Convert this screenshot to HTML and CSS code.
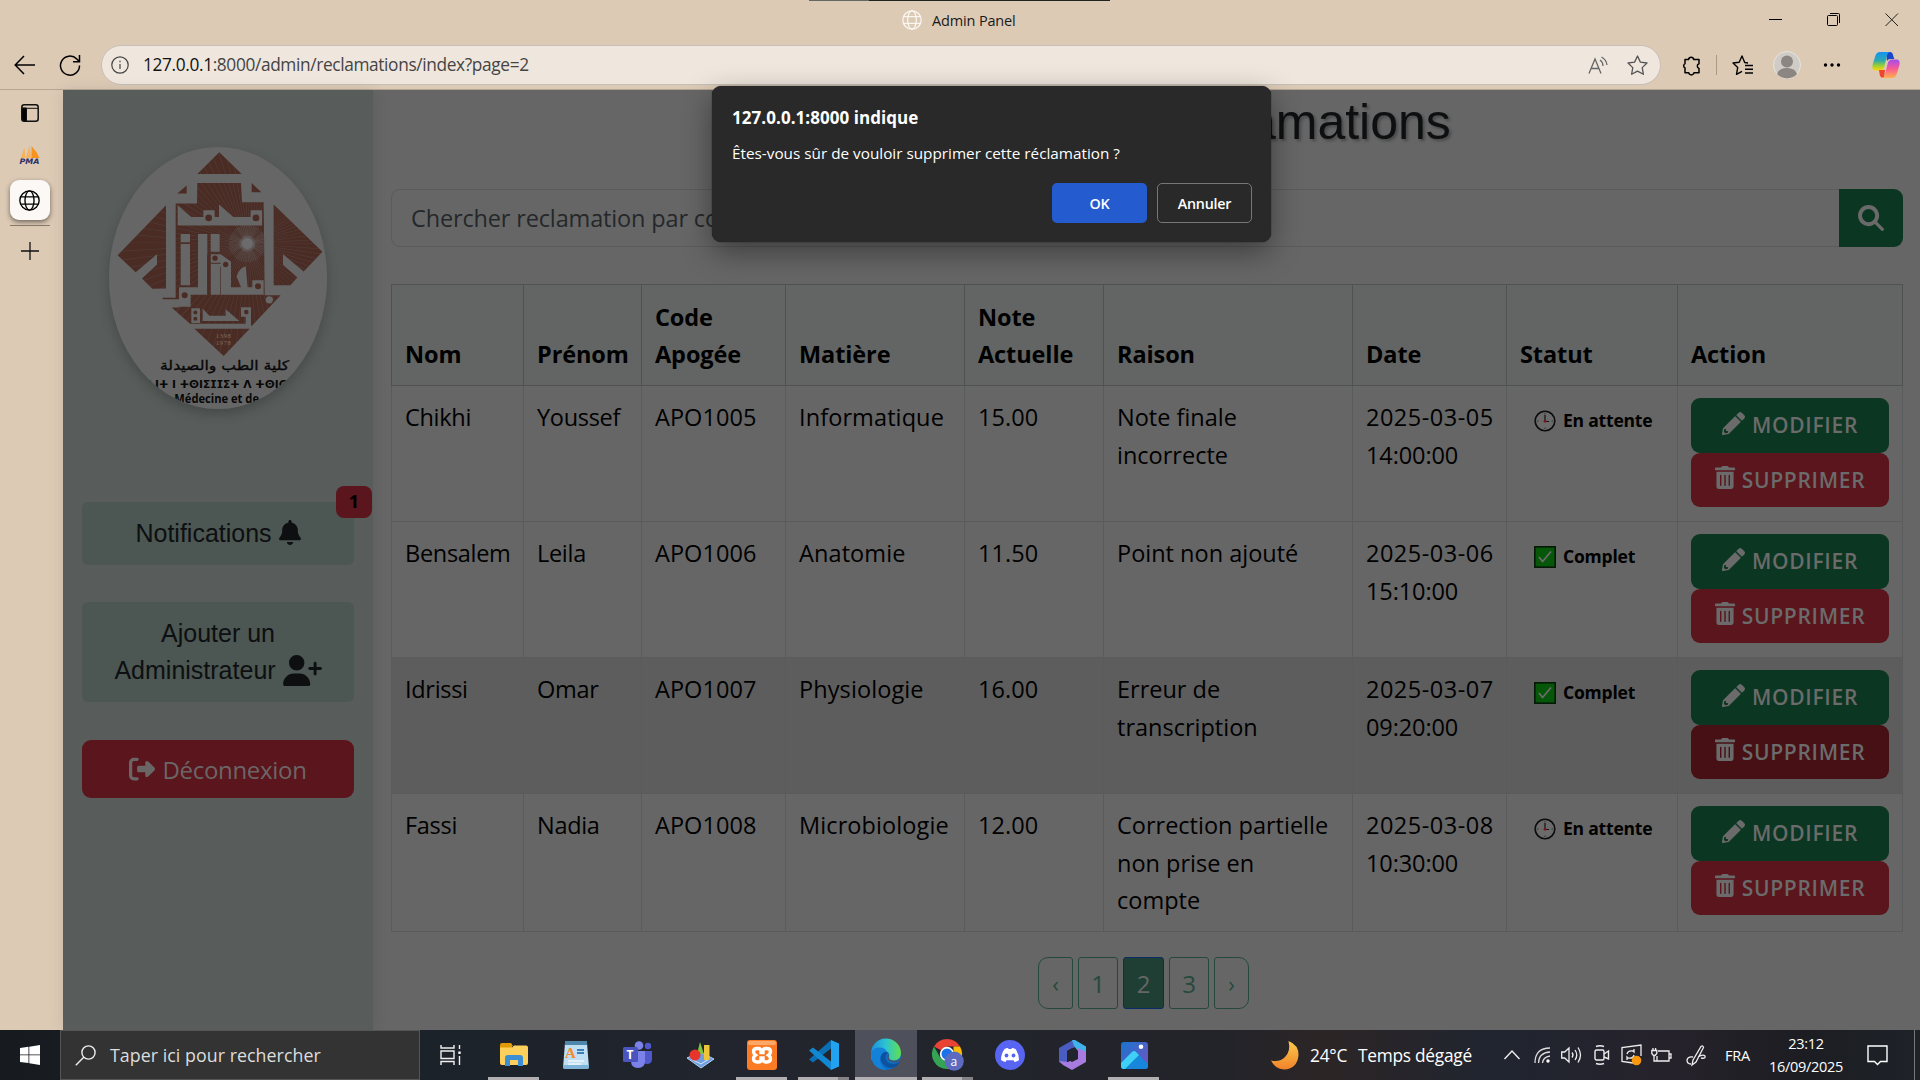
FILE: index.html
```html
<!DOCTYPE html>
<html lang="fr">
<head>
<meta charset="utf-8">
<title>Admin Panel</title>
<link rel="stylesheet" href="styles.css">
</head>
<body>
<svg class="defs" width="0" height="0" aria-hidden="true">
  <symbol id="pencil" viewBox="0 0 512 512"><path d="M497.9 142.1l-46.1 46.1c-4.7 4.7-12.3 4.7-17 0l-111-111c-4.7-4.7-4.7-12.3 0-17l46.1-46.1c18.7-18.7 49.1-18.7 67.9 0l60.1 60.1c18.8 18.7 18.8 49.1 0 67.9zM284.2 99.8L21.6 362.4.4 483.9c-2.9 16.4 11.4 30.6 27.8 27.8l121.5-21.3 262.6-262.6c4.7-4.7 4.7-12.3 0-17l-111-111c-4.8-4.7-12.4-4.7-17.1 0zM88 424h48v36.3l-64.5 11.3-31.1-31.1L51.7 376H88v48z"/></symbol>
  <symbol id="trash" viewBox="0 0 448 512"><path d="M32 464a48 48 0 0 0 48 48h288a48 48 0 0 0 48-48V128H32zm272-256a16 16 0 0 1 32 0v224a16 16 0 0 1-32 0zm-96 0a16 16 0 0 1 32 0v224a16 16 0 0 1-32 0zm-96 0a16 16 0 0 1 32 0v224a16 16 0 0 1-32 0zM432 32H312l-9.4-18.7A24 24 0 0 0 281.1 0H166.8a23.7 23.7 0 0 0-21.4 13.3L136 32H16A16 16 0 0 0 0 48v32a16 16 0 0 0 16 16h416a16 16 0 0 0 16-16V48a16 16 0 0 0-16-16z"/></symbol>
  <symbol id="clock" viewBox="0 0 22 22"><circle cx="11" cy="11" r="9.8" fill="#6b6b6b" stroke="#0c0c0c" stroke-width="1.6"/><g stroke="#333" stroke-width="1"><path d="M11 3v1.5M11 17.5V19M3 11h1.5M17.5 11H19"/></g><path d="M11 5v6.5h4" fill="none" stroke="#111" stroke-width="1.2"/><circle cx="11" cy="11.3" r="1.4" fill="#7c1620"/></symbol>
  <symbol id="check" viewBox="0 0 22 22"><rect x=".8" y=".8" width="20.4" height="20.4" fill="#06570a" stroke="#041504" stroke-width="1.5"/><path d="M5 11l3.600 4.500L17 5.500" fill="none" stroke="#6d6d6d" stroke-width="1.7"/></symbol>
  <symbol id="globe" viewBox="0 0 20 20"><g fill="none" stroke="currentColor" stroke-width="1.3"><circle cx="10" cy="10" r="9.2"/><ellipse cx="10" cy="10" rx="4.3" ry="9.2"/><path d="M1.6 6.6h16.8M1.6 13.4h16.8"/></g></symbol>
</svg>

<div class="screen">
  <header class="titlebar">
    <div class="peek"></div>
    <div class="tab-title"><svg width="20" height="20"><use href="#globe"/></svg><span>Admin Panel</span></div>
    <div class="win-buttons">
      <svg width="14" height="14"><path d="M0 6.5h13" stroke="#000"/></svg>
      <svg width="14" height="14" fill="none" stroke="#000"><rect x=".5" y="2.5" width="10" height="10" rx="1"/><path d="M3 .5h8.500a1 1 0 0 1 1 1V10"/></svg>
      <svg width="14" height="14"><path d="M.5.5l12.500 12.500M13 .5L.5 13" stroke="#222" fill="none"/></svg>
    </div>
  </header>

  <div class="toolbar">
    <div class="nav-buttons">
      <svg width="22" height="20" fill="none" stroke="#000" stroke-width="1.5"><path d="M21 10H1.500M10 1L1.200 10l8.800 9"/></svg>
      <svg width="22" height="22" fill="none" stroke="#000" stroke-width="1.500"><path d="M20.500 11.500A9.500 9.500 0 1 1 17.800 5l2.500 2.500M20.500 1v6.700h-6.500"/></svg>
    </div>
    <div class="address">
      <svg width="18" height="18" fill="none" stroke="#444" stroke-width="1.200"><circle cx="9" cy="9" r="8.200"/><path d="M9 8v5M9 4.800v1.500"/></svg>
      <span class="url"><b>127.0.0.1</b>:8000/admin/reclamations/index?page=2</span>
      <svg class="aloud" width="20" height="19" fill="none" stroke="#666" stroke-width="1.300"><path d="M1 17.500L7 3l6 14.500M3 12.500h8M12 4q3 2 3 6M13.500 1q5 3 5.500 8"/></svg>
      <svg class="fav" width="21" height="21" fill="none" stroke="#555" stroke-width="1.300" stroke-linejoin="round"><path d="M10.500 1l2.900 6.100 6.600.9-4.800 4.600 1.200 6.700-5.900-3.200-5.900 3.200 1.200-6.700L1 8l6.600-.9z"/></svg>
    </div>
    <div class="tools">
      <svg width="19" height="21" fill="none" stroke="#000" stroke-width="1.500" stroke-linejoin="round"><path d="M3 4.500h3.500a2.700 2.700 0 0 1 5.300 0H17v4.300a2.400 2.400 0 0 0 0 4.600v4.300h-5a2.700 2.700 0 0 1-5.300 0H3v-4.700a2.400 2.400 0 0 1 0-4.300z"/></svg>
      <i class="sep"></i>
      <svg width="21" height="21" fill="none" stroke="#000" stroke-width="1.400" stroke-linejoin="round"><path d="M16 8l-3.300-.5L10 1 7.200 7.300 1 8l4.700 4.600-1.200 6.700 5.500-3M13 10.500h8M13 14.200h8M13 18h8"/></svg>
      <svg width="28" height="28"><circle cx="14" cy="14" r="13.500" fill="#cfcbc6" stroke="#e8e4de"/><circle cx="14" cy="10.500" r="6" fill="#8b8682"/><path d="M4 23q2-6 10-6t10 6a13.500 13.500 0 0 1-20 0z" fill="#8b8682"/></svg>
      <svg width="18" height="6"><circle cx="2.500" cy="3" r="1.700"/><circle cx="9" cy="3" r="1.700"/><circle cx="15.500" cy="3" r="1.700"/></svg>
      <svg width="28" height="28" viewBox="0 0 28 28">
        <defs><linearGradient id="cpa" x1="0" y1="0" x2="0" y2="1"><stop offset="0" stop-color="#1493f5"/><stop offset=".45" stop-color="#2ba8b0"/><stop offset=".75" stop-color="#9fd02f"/><stop offset="1" stop-color="#ffd60a"/></linearGradient><linearGradient id="cpb" x1="0" y1="0" x2="0" y2="1"><stop offset="0" stop-color="#a04df0"/><stop offset=".5" stop-color="#fb5b94"/><stop offset="1" stop-color="#ffb04a"/></linearGradient></defs>
        <path d="M14 1h4q2.500 0 3 3l1.200 4H18q-2 0-3 2z" fill="#1746c8"/>
        <path d="M8 1h10q-2 0-2.800 3l-3 12q-1 3.500-4 3.500H3.500Q-.5 19.500.5 14L3.300 5Q4.500 1 8 1z" fill="url(#cpa)"/>
        <path d="M7 19h6l-1 8Q8.500 27 7.800 24z" fill="#f0442d"/>
        <path d="M20 27H10q2 0 2.800-3l3-12q1-3.500 4-3.500h4.700q4 0 3 5.500L24.700 23Q23.500 27 20 27z" fill="url(#cpb)"/>
      </svg>
    </div>
  </div>

  <div class="body">
    <nav class="vtabs">
      <svg class="vt-panel" width="18" height="18"><rect x=".8" y=".8" width="16.400" height="16.400" rx="2.500" fill="none" stroke="#111" stroke-width="1.500"/><path d="M1 4h4.500v13H3q-2 0-2-2zM1 4.300h16" stroke="#111" stroke-width="1"/></svg>
      <svg class="vt-pma" width="22" height="20" viewBox="0 0 22 20"><path d="M2 13Q4 6 5.500 3l1 10zM7 13Q9 6 10.500 0L12 13z" fill="#f7b25a"/><path d="M12.500 13V1q5 5 8 12z" fill="#f79420"/><text x="0.500" y="18.500" class="pma-text" textLength="20" lengthAdjust="spacingAndGlyphs">PMA</text></svg>
      <div class="vt-active"><svg width="21" height="21"><use href="#globe"/></svg></div>
      <i class="vt-line"></i>
      <svg width="18" height="18"><path d="M9 0v18M0 9h18" stroke="#111" stroke-width="1.300"/></svg>
    </nav>

    <div class="page">
      <aside class="sidebar">
        <svg class="logo" width="218" height="262" viewBox="147 80 654 787" preserveAspectRatio="none">
          <defs>
            <clipPath id="oval"><ellipse cx="474" cy="473.500" rx="327" ry="393.500"/></clipPath>
            <clipPath id="rayclip"><path d="M478 96L412 161H545zM412 188H543L546 246H611L614 525H662L575 614H390L335 562V533H347V250H411zM318 255V506H277L173 405zM641 253L787 395L691 495H641zM403 626H569L491 708z"/></clipPath>
          </defs>
          <g clip-path="url(#oval)">
            <rect x="147" y="80" width="654" height="787" fill="#666"/>
            <g fill="#4a2c25">
              <path d="M478 96L412 161H545zM352 220L380 196V220zM575 188L604 216H575z"/>
              <path d="M412 188H543L546 246H611L614 525H662L575 618L568 611H390L335 562H357V537H308V533H347V250H411z"/>
              <path d="M318 255V505L277 506L246 475L291 433V402L227 456L173 405z"/>
              <path d="M641 253L787 395L731 454L669 402V434L712 472L691 495H641z"/>
              <path d="M403 626H569L491 708z"/>
            </g>
            <g clip-path="url(#rayclip)" fill="none" stroke="#666">
              <circle cx="562" cy="370" r="210" stroke-width="420" pathLength="90" stroke-dasharray=".1 .9" opacity=".35"/>
              <circle cx="562" cy="370" r="28" stroke-width="56" pathLength="60" stroke-dasharray=".4 .6" opacity=".5"/>
            </g>
            <circle cx="562" cy="370" r="24" fill="#666" opacity=".5"/><circle cx="562" cy="370" r="17" fill="#6b6b6b"/>
            <g fill="#666">
              <path d="M353 255L394 290H430V270H464V290H477V253L520 290H572V270H606V316H353z"/>
              <path d="M362 341h28v25h-28zM362 371h28v124h-28zM452 341h27v54h-27z"/>
              <path d="M357 501H414V341H442V524H452V402H482L513 424V501H543L530 470Q535 445 557 438L563 501H577V480H611V524H392V560H357z"/>
              <path d="M394 564h26v45h-26zM428 565L448 587H497V567L538 603H428zM543 561H573V618H557V590H543z"/>
              <circle cx="628" cy="539" r="11"/>
            </g>
            <g fill="#4a2c25"><circle cx="446" cy="293" r="10"/><circle cx="588" cy="293" r="10"/><circle cx="465" cy="414" r="8"/><circle cx="497" cy="433" r="8"/><circle cx="594" cy="498" r="9"/><circle cx="374" cy="525" r="9"/><circle cx="406" cy="577" r="6"/><circle cx="406" cy="596" r="6"/><circle cx="559" cy="576" r="7"/><path d="M452 428H482V431H452zM481 440h2v84h-2zM442 402h3v122h-3zM448 402h3v122h-3z"/></g>
            <g class="logo-year"><text x="468" y="654" textLength="44">1398</text><text x="468" y="675" textLength="44">1978</text></g>
            <text class="logo-ar" x="494" y="749" textLength="388" lengthAdjust="spacingAndGlyphs">كلية الطب والصيدلة</text>
            <text class="logo-tif" x="262" y="803" textLength="424" lengthAdjust="spacingAndGlyphs">ⵏ ⵏⵜ ⵏ ⵜⵙⵏⵉⵊⵊⵉⵜ ⴷ ⵜⵙⵏⵙ</text>
            <text class="logo-fr" x="343" y="850" textLength="254" lengthAdjust="spacingAndGlyphs">Médecine et de</text>
          </g>
        </svg>
        <a class="side-btn notif">Notifications <svg width="22" height="25" viewBox="0 0 448 512"><path d="M224 0c-17.700 0-32 14.300-32 32V51.200C119 66 64 130.600 64 208v18.800c0 47-17.300 92.400-48.500 127.600l-7.400 8.300c-8.400 9.400-10.400 22.900-5.300 34.400S19.400 416 32 416H416c12.600 0 24-7.400 29.200-18.900s3.100-25-5.300-34.400l-7.400-8.300C401.300 319.200 384 273.900 384 226.800V208c0-77.400-55-142-128-156.800V32c0-17.700-14.300-32-32-32zm45.300 493.300c12-12 18.700-28.300 18.700-45.300H160c0 17 6.700 33.300 18.700 45.300s28.300 18.700 45.300 18.700s33.300-6.700 45.300-18.700z"/></svg><span class="badge">1</span></a>
        <a class="side-btn add">Ajouter un<br>Administrateur <svg width="39" height="31" viewBox="0 0 640 512"><path d="M96 128a128 128 0 1 1 256 0A128 128 0 1 1 96 128zM0 482.300C0 383.800 79.800 304 178.300 304h91.400C368.200 304 448 383.800 448 482.300c0 16.400-13.300 29.700-29.700 29.700H29.700C13.300 512 0 498.700 0 482.300zM504 312V248H440c-13.300 0-24-10.700-24-24s10.700-24 24-24h64V136c0-13.300 10.700-24 24-24s24 10.700 24 24v64h64c13.300 0 24 10.700 24 24s-10.700 24-24 24H552v64c0 13.300-10.700 24-24 24s-24-10.700-24-24z"/></svg></a>
        <a class="logout"><svg width="26" height="26" viewBox="0 0 512 512"><path d="M377.900 105.900L500.700 228.700c7.200 7.200 11.300 17.100 11.300 27.300s-4.100 20.100-11.300 27.300L377.900 406.100c-6.400 6.400-15 9.900-24 9.900c-18.700 0-33.900-15.200-33.900-33.900l0-62.100-128 0c-17.700 0-32-14.300-32-32l0-64c0-17.700 14.300-32 32-32l128 0 0-62.100c0-18.700 15.200-33.900 33.900-33.900c9 0 17.600 3.600 24 9.900zM160 96L96 96c-17.700 0-32 14.300-32 32l0 256c0 17.700 14.300 32 32 32l64 0c17.700 0 32 14.300 32 32s-14.300 32-32 32l-64 0c-53 0-96-43-96-96L0 128C0 75 43 32 96 32l64 0c17.700 0 32 14.300 32 32s-14.300 32-32 32z"/></svg><span>Déconnexion</span></a>
      </aside>

      <main class="content">
        <h1>Gestion des Réclamations</h1>
        <div class="search">
          <div class="search-input">Chercher reclamation par code</div>
          <button class="search-btn"><svg width="26" height="26" viewBox="0 0 512 512"><path d="M416 208c0 45.900-14.900 88.300-40 122.700L502.600 457.400c12.500 12.500 12.500 32.800 0 45.300s-32.800 12.500-45.300 0L330.700 376c-34.400 25.200-76.800 40-122.700 40C93.100 416 0 322.900 0 208S93.100 0 208 0S416 93.100 416 208zM208 338a130 130 0 1 0 0-260 130 130 0 1 0 0 260z"/></svg></button>
        </div>

        <table>
          <colgroup><col class="c1"><col class="c2"><col class="c3"><col class="c4"><col class="c5"><col class="c6"><col class="c7"><col class="c8"><col class="c9"></colgroup>
          <thead><tr><th>Nom</th><th>Prénom</th><th>Code<br>Apogée</th><th>Matière</th><th>Note<br>Actuelle</th><th>Raison</th><th>Date</th><th>Statut</th><th>Action</th></tr></thead>
          <tbody>
            <tr><td>Chikhi</td><td>Youssef</td><td class="num">APO1005</td><td class="mat">Informatique</td><td class="num">15.00</td><td>Note finale<br>incorrecte</td><td class="date">2025-03-05<br><span>14:00:00</span></td>
              <td><span class="status"><svg width="22" height="22"><use href="#clock"/></svg>En attente</span></td>
              <td><a class="act edit"><svg width="23" height="23"><use href="#pencil"/></svg><span>MODIFIER</span></a><a class="act del"><svg width="20" height="23"><use href="#trash"/></svg><span>SUPPRIMER</span></a></td></tr>
            <tr><td>Bensalem</td><td>Leila</td><td class="num">APO1006</td><td class="mat">Anatomie</td><td class="num">11.50</td><td>Point non ajouté</td><td class="date">2025-03-06<br><span>15:10:00</span></td>
              <td><span class="status"><svg width="22" height="22"><use href="#check"/></svg>Complet</span></td>
              <td><a class="act edit"><svg width="23" height="23"><use href="#pencil"/></svg><span>MODIFIER</span></a><a class="act del"><svg width="20" height="23"><use href="#trash"/></svg><span>SUPPRIMER</span></a></td></tr>
            <tr class="hover"><td>Idrissi</td><td>Omar</td><td class="num">APO1007</td><td class="mat">Physiologie</td><td class="num">16.00</td><td>Erreur de<br>transcription</td><td class="date">2025-03-07<br><span>09:20:00</span></td>
              <td><span class="status"><svg width="22" height="22"><use href="#check"/></svg>Complet</span></td>
              <td><a class="act edit"><svg width="23" height="23"><use href="#pencil"/></svg><span>MODIFIER</span></a><a class="act del pressed"><svg width="20" height="23"><use href="#trash"/></svg><span>SUPPRIMER</span></a></td></tr>
            <tr class="last"><td>Fassi</td><td>Nadia</td><td class="num">APO1008</td><td class="mat">Microbiologie</td><td class="num">12.00</td><td>Correction partielle<br>non prise en<br>compte</td><td class="date">2025-03-08<br><span>10:30:00</span></td>
              <td><span class="status"><svg width="22" height="22"><use href="#clock"/></svg>En attente</span></td>
              <td><a class="act edit"><svg width="23" height="23"><use href="#pencil"/></svg><span>MODIFIER</span></a><a class="act del"><svg width="20" height="23"><use href="#trash"/></svg><span>SUPPRIMER</span></a></td></tr>
          </tbody>
        </table>

        <div class="pager"><a class="prev">‹</a><a>1</a><a class="on">2</a><a>3</a><a class="next">›</a></div>
      </main>
    </div>
  </div>

  <footer class="taskbar">
    <div class="start"><svg width="20" height="20" fill="#fff"><path d="M0 3l8.500-1.200v7.700H0zM9.300 1.700L20 0v9.500H9.300zM0 10.300h8.500V18L0 16.900zM9.300 10.300H20V20L9.300 18.200z"/></svg></div>
    <div class="task-search"><svg width="21" height="21" fill="none" stroke="#eee" stroke-width="1.400"><circle cx="13.500" cy="7.500" r="6.600"/><path d="M9 12L.8 20.300"/></svg><span>Taper ici pour rechercher</span></div>
    <div class="slot tv"><svg width="22" height="20" fill="none" stroke="#f0f0f0" stroke-width="1.400"><path d="M1 0v3h13V0M1 20v-3.500h13V20M1 6h13v7.500H1zM19.500 0v4M19.500 11v9"/><rect x="18.300" y="6.500" width="2.400" height="2.400" fill="#fff" stroke="none"/></svg></div>
    <div class="slot open"><svg width="28" height="24"><path d="M0 2q0-2 2-2h9l2 3h-1v6H0z" fill="#e09a05"/><path d="M0 4.500h12l2-2h12q2 0 2 2V20q0 2-2 2H2q-2 0-2-2z" fill="#fdd05b"/><path d="M5 23v-8q0-3 3-3h12q3 0 3 3v8h-5v-6h-8v6z" fill="#3b8fd2"/></svg></div>
    <div class="slot"><svg width="26" height="29"><path d="M2 2h22l2 25H0z" fill="#bfe0f3"/><path d="M2 0h22v4H2z" fill="#4f86ab"/><path d="M0 24h26v3q0 1-2 1H2q-2 0-2-1z" fill="#7fb4d8"/><text x="2" y="17" class="wp">A</text><path d="M14 9h7M14 12h7" stroke="#3a7fb8" stroke-width="2"/><path d="M5 20h16M5 23h13" stroke="#eef6fb" stroke-width="1.500"/></svg></div>
    <div class="slot"><svg width="30" height="28"><circle cx="25" cy="5" r="3.200" fill="#5059c9"/><circle cx="16" cy="4.500" r="4.300" fill="#7b83eb"/><path d="M20 10h9v8q0 5-5 5-4 0-4-4z" fill="#5059c9"/><path d="M8 10h14v10q0 7-7 7t-7-7z" fill="#7b83eb"/><rect y="6" width="15" height="15" rx="1.500" fill="#4b53bc"/><text x="3.500" y="18" class="tm">T</text></svg></div>
    <div class="slot"><svg width="28" height="26"><path d="M1 16l13-6 14 7-13 9z" fill="#6d9fe0" stroke="#b5d0f2"/><path d="M5 17l10 5 8-5" stroke="#d8e8fa" fill="none"/><path d="M11 12L14 0l4 12z" fill="#7ec63d"/><rect x="18" y="3" width="5.500" height="15" fill="#f0c33c"/><circle cx="9" cy="13" r="5.500" fill="#e8352c"/></svg></div>
    <div class="slot open"><svg width="30" height="30"><rect width="30" height="30" rx="3" fill="#fb7a24"/><rect x="1" y="1" width="28" height="4" rx="2" fill="#fca868"/><path d="M10 8.500h1.500q2.500 0 2.500 2.500v1.500h2V11q0-2.500 2.500-2.500H20q3.500 0 3.500 3.300 0 2-2 3.400 2 1.400 2 3.400 0 3.400-3.500 3.400h-1.500q-2.500 0-2.500-2.500V18h-2v1.500q0 2.500-2.500 2.500H10q-3.500 0-3.500-3.400 0-2 2-3.400-2-1.400-2-3.400 0-3.300 3.500-3.300z" fill="none" stroke="#fff" stroke-width="3.400"/></svg></div>
    <div class="slot open stack"><svg width="30" height="30"><path d="M22 0l8 3.500v23L22 30z" fill="#22a3ef"/><path d="M22 0v8.500L4 22.500 0 19.500z" fill="#0a6fb5"/><path d="M0 10.500L4 7.500l18 14V30z" fill="#1288d3"/></svg></div>
    <div class="slot active"><svg width="30" height="30"><defs><linearGradient id="eg"><stop offset="0" stop-color="#1b8fe0"/><stop offset=".5" stop-color="#2dc4d0"/><stop offset="1" stop-color="#62e04d"/></linearGradient></defs><circle cx="15" cy="15" r="15" fill="#0f6dc4"/><path d="M0 14A15 15 0 0 1 30 13q0 7-7 7.500-6 .5-5-2.500 1.500-7-5-7T0 20z" fill="url(#eg)"/><path d="M0 14q1-6 8-6.500 7 0 8 5-6-1-7 6 0 8 7 11.500Q1 30 0 14z" fill="#1381d8"/><path d="M17 12.500q-5 5 0 10 5 3 12-.5l-3 4q-6 4-12 0-7-6-3-12 2-3 6-1.500z" fill="#0c52a0"/><path d="M18 14q-1.500 4 2 6 5 2 10-.5l-1 2q-6 2-11-1-3.500-4 0-6.500z" fill="#4e515b"/></svg></div>
    <div class="slot open stack"><svg class="chrome" width="32" height="32"><path d="M15 0a15 15 0 0 1 13 7.500H15L8.500 11 2 7.500A15 15 0 0 1 15 0z" fill="#e94335"/><path d="M28 7.500A15 15 0 0 1 15 30l6.500-11V7.500z" fill="#fbbc05"/><path d="M2 7.500L8.500 19 15 22.500V30A15 15 0 0 1 2 7.500z" fill="#34a353"/><circle cx="15" cy="15" r="7.200" fill="#fff"/><circle cx="15" cy="15" r="5.500" fill="#1a73e8"/><circle cx="22.200" cy="22.200" r="9.600" fill="#5c6bc0"/><text x="18.500" y="26.500" class="ch">a</text></svg></div>
    <div class="slot"><svg width="30" height="30"><circle cx="15" cy="15" r="15" fill="#5865f2"/><path d="M9.500 9q2.500-1.300 3.500-1l.6 1h2.800l.6-1q1 0 3.500 1 3.500 5 3.500 11-2 1.700-4.500 2l-1-1.800h-7L10.500 22Q8 21.700 6 20q0-6 3.500-11z" fill="#fff"/><circle cx="11.500" cy="15.500" r="1.900" fill="#5865f2"/><circle cx="18.500" cy="15.500" r="1.900" fill="#5865f2"/></svg></div>
    <div class="slot"><svg width="28" height="30"><path d="M15 0L1 8v14l8 4.500V11l10-5z" fill="#4a5cc0"/><path d="M14 0h3l11 6.500V16l-8-5-4-5z" fill="#3fb3ea"/><path d="M28 12v10L14 30l-9-5-4-4 9 1 10-5V8z" fill="#a77be0"/><path d="M9 11l5-3 6 3.500v7.500l-6 3-5-3z" fill="#22252d"/></svg></div>
    <div class="slot open"><svg width="27" height="27"><defs><linearGradient id="ph" x1="0" y1="0" x2="1" y2="1"><stop offset="0" stop-color="#1576cf"/><stop offset="1" stop-color="#7d4fc0"/></linearGradient></defs><rect width="27" height="27" rx="3" fill="url(#ph)"/><path d="M0 21l11-11q2-2 4 0l12 12v2q0 3-3 3H3q-3 0-3-3z" fill="#1687da"/><path d="M0 21l11-11q2-2 4 0l3 3L4 27H3q-3 0-3-3z" fill="#3fd0f5"/><circle cx="20" cy="4.800" r="2.300" fill="#fff"/></svg></div>

    <div class="tray">
      <svg class="moon" width="29" height="29"><defs><linearGradient id="mn" x1="0" y1="0" x2="0" y2="1"><stop offset="0" stop-color="#fbcb4a"/><stop offset="1" stop-color="#f0822b"/></linearGradient></defs><path d="M17.500 0Q28 4 27.500 14.500 26 28 13 28.500 4 28 0 19.500q9 2 14-3.500 6-6 3.500-16z" fill="url(#mn)"/></svg>
      <span class="temp">24°C</span><span class="meteo">Temps dégagé</span>
      <svg class="t1" width="16" height="10" fill="none" stroke="#eee" stroke-width="1.400"><path d="M.5 9L8 1l7.500 8"/></svg>
      <svg class="t2" width="17" height="17" fill="none" stroke="#ddd" stroke-width="1.300"><path d="M1 16Q1 1 16 1M4.500 16Q5 5.500 16 5M8.500 16Q9 10 16 9"/><circle cx="14" cy="14" r="1.700" fill="#fff" stroke="none"/></svg>
      <svg class="t3" width="21" height="18" fill="none" stroke="#eee" stroke-width="1.300"><path d="M.7 6h3L8 2v14l-4.300-4h-3zM11 6.500q2 2.500 0 5M14 4q3.500 5 0 10M17 1.500q5 7.500 0 15"/></svg>
      <svg class="t4" width="16" height="20" fill="none" stroke="#eee" stroke-width="1.400"><rect x="1" y="5" width="9" height="10" rx="1.500"/><path d="M10 9l4.500-3v8L10 12M2 1.500q4-1.500 8 0M2 18.500q4 1.500 8 0"/></svg>
      <svg class="t5" width="21" height="22" fill="none" stroke="#eee" stroke-width="1.300"><path d="M20 12V1L1 3.500v14L12 19"/><path d="M6 10q1-4 6-3l1 1V5M13 11q-1 4-6 3l-1-1v3"/><circle cx="15.500" cy="16.500" r="4.800" fill="#f9980d" stroke="none"/></svg>
      <svg class="t6" width="21" height="16" fill="none" stroke="#eee" stroke-width="1.300"><path d="M7 4h11v10H6V9M18.500 7h1.500v4h-1.500M3 9v5h3M.8 3.500h5v3L4 8.500H2.500L.8 6.500zM2 3.500V1M4.600 3.500V1"/></svg>
      <svg class="t7" width="21" height="21" fill="none" stroke="#eee" stroke-width="1.300"><path d="M7 15L15 1.500q2-1.500 2.500 1L10 17l-4 3zM7 12q-5-1-6 3 0 4 4 4M12 12q5-3 7-1 1 3-4 2"/></svg>
      <span class="lang">FRA</span>
      <div class="clock"><span>23:12</span><span>16/09/2025</span></div>
      <svg class="t8" width="21" height="21" fill="none" stroke="#fff" stroke-width="1.400"><path d="M1 1h19v15.500h-6.500L10.500 19.500l-3-3H1z"/></svg>
      <i class="desk"></i>
    </div>
  </footer>

  <div class="dialog" role="alertdialog">
    <h2>127.0.0.1:8000 indique</h2>
    <p>Êtes-vous sûr de vouloir supprimer cette réclamation ?</p>
    <div class="dialog-actions"><button class="ok">OK</button><button class="cancel">Annuler</button></div>
  </div>
</div>
</body>
</html>
```
FILE: styles.css
```css
* { box-sizing: border-box; }
body { margin: 0; font-family: "Open Sans", "Noto Sans", sans-serif; }
.defs { position: absolute; }
svg { display: block; flex: none; overflow: visible; }
button { font: inherit; border: 0; padding: 0; }

.screen { position: relative; width: 1920px; height: 1080px; overflow: hidden; display: flex; flex-direction: column; background: #dccab5; }

/* browser chrome */
.titlebar { height: 45px; position: relative; display: flex; align-items: center; }
.peek { position: absolute; left: 809px; top: 0; width: 301px; height: 1px; background: linear-gradient(90deg, #666 60px, #222 60px); }
.tab-title { display: flex; align-items: center; gap: 10px; margin: -5px 0 0 902px; font-size: 14.5px; letter-spacing: -.15px; color: #1a1a1a; }
.tab-title svg { color: #faf6f0; }
.win-buttons { display: flex; gap: 44px; margin: -6px 21px 0 auto; }

.toolbar { height: 45px; display: flex; align-items: flex-start; border-bottom: 1px solid #b5a694; }
.nav-buttons { display: flex; align-items: center; gap: 23px; width: 101px; height: 40px; padding-left: 14px; }
.address { width: 1560px; height: 40px; border: 1px solid #c6bfb7; border-radius: 20px; background: #efe7de; display: flex; align-items: center; padding: 0 12px 0 9px; }
.url { margin: -2px 0 0 14px; font-size: 17.3px; letter-spacing: -.36px; color: #444; }
.url b { font-weight: 400; color: #111; }
.aloud { margin-left: auto; }
.fav { margin-left: 19px; }
.tools { flex: 1; height: 40px; display: flex; align-items: center; padding-left: 21px; }
.sep { width: 1px; height: 20px; background: #a89a89; margin: 0 15px 0 15px; }
.tools svg:nth-of-type(3) { margin-left: 20px; }
.tools svg:nth-of-type(4) { margin-left: 22px; }
.tools svg:nth-of-type(5) { margin-left: 31px; }

.body { height: 940px; display: flex; }
.vtabs { flex: none; width: 63px; display: flex; flex-direction: column; align-items: center; padding: 14px 4px 0 0; }
.vt-pma { margin-top: 23px; }
.pma-text { font: italic 700 7.5px "DejaVu Sans", sans-serif; fill: #2e2f66; }
.vt-active { width: 40px; height: 40px; margin-top: 15px; border-radius: 9px; background: #fbf8f5; box-shadow: 0 2px 5px rgba(0,0,0,.5); display: flex; align-items: center; justify-content: center; }
.vt-line { width: 40px; height: 1px; background: #85796b; margin: 5px 0 16px; }

/* application */
.page { flex: 1; display: flex; background: #666; }
.sidebar { flex: none; width: 310px; background: #585d5b; box-shadow: 0 0 14px rgba(0,0,0,.1); padding: 57px 19px 0; display: flex; flex-direction: column; align-items: center; }
.logo { border-radius: 50%; box-shadow: 0 5px 12px rgba(0,0,0,.22); }
.logo-year { font: 19px "Liberation Serif", serif; fill: #7a6f6a; }
.logo-ar { font: 400 40px "DejaVu Sans", sans-serif; text-anchor: middle; fill: #080808; stroke: #080808; stroke-width: 1; direction: rtl; }
.logo-tif { font: 700 33px "DejaVu Sans", sans-serif; fill: #080808; }
.logo-fr { font: 700 36px "Open Sans", sans-serif; fill: #080808; }
.side-btn { position: relative; width: 272px; background: #4c5652; border-radius: 6px; color: #0d0f11; fill: #0d0f11; font: 25px/37px "Liberation Sans", Arial, sans-serif; text-align: center; }
.side-btn svg { display: inline-block; }
.notif { margin-top: 93px; height: 63px; padding-top: 13px; }
.notif svg { vertical-align: -3px; }
.badge { position: absolute; left: 254px; top: -16px; width: 36px; height: 32px; border-radius: 8px; background: #5a151d; color: #000; font: 700 18px/31px "Open Sans", sans-serif; }
.add { margin-top: 37px; height: 100px; padding-top: 13px; }
.add svg { vertical-align: -7px; }
.logout { margin-top: 38px; width: 272px; height: 58px; border-radius: 9px; background: #5a151d; color: #6b6666; fill: #6b6666; display: flex; align-items: center; justify-content: center; gap: 7px; font-size: 24px; letter-spacing: -.3px; }

.content { flex: 1; padding: 0 18px; display: flex; flex-direction: column; }
h1 { margin: 0 0 40px; padding-left: 24px; height: 59px; font: 500 50px/64px "Liberation Sans", Arial, sans-serif; text-align: center; color: #0d0f10; text-shadow: 2px 2px 3px rgba(0,0,0,.3); }
.search { display: flex; height: 58px; margin-bottom: 37px; }
.search-input { flex: 1; border: 1px solid #5a5b5c; border-right: 0; border-radius: 9px 0 0 9px; padding: 0 19px; font-size: 23.5px; line-height: 56px; letter-spacing: -.15px; color: #25282a; }
.search-btn { width: 64px; background: #0a3622; fill: #6a6a6a; border-radius: 0 9px 9px 0; display: flex; align-items: center; justify-content: center; }

table { border-collapse: collapse; table-layout: fixed; width: 1511px; font-size: 23.5px; line-height: 37.5px; letter-spacing: 0; color: #000; }
.c1 { width: 132px; } .c2 { width: 118px; } .c3 { width: 144px; } .c4 { width: 179px; } .c5 { width: 139px; }
.c6 { width: 249px; } .c7 { width: 154px; } .c8 { width: 171px; } .c9 { width: 225px; }
th, td { border: 1px solid #5a5b5c; padding: 13px 0 0 13px; text-align: left; vertical-align: top; white-space: nowrap; }
th { height: 101px; border-color: #505251; background: #626564; vertical-align: bottom; padding: 0 0 12px 13px; font-weight: 700; line-height: 37px; letter-spacing: -.1px; }
td { height: 136px; }
td:first-child { letter-spacing: -.3px; }
td:nth-child(2) { letter-spacing: -.3px; }
td:last-child { padding-top: 12px; }
td.num { letter-spacing: .05px; }
td.mat { letter-spacing: .1px; }
td.date { letter-spacing: .5px; }
td.date span { letter-spacing: -.1px; }
.last td { height: 138px; }
.hover td { background: #5d5d5d; }
.status { display: flex; align-items: center; gap: 7px; padding-left: 14px; height: 22px; margin-top: 11px; font-size: 17.5px; font-weight: 700; letter-spacing: -.2px; }
.act { display: flex; align-items: center; justify-content: center; gap: 7px; width: 198px; height: 54.5px; border-radius: 9px; font-size: 21px; font-weight: 600; letter-spacing: .7px; line-height: 1; color: #6b6b6b; fill: #6b6b6b; }
.act svg { margin-top: -4px; }
.act span { margin-top: 1px; }
.edit { background: #0a3622; }
.del { background: #5a151d; }
.pressed { background: #461015; }

.pager { display: flex; gap: 5px; margin: 25px 0 0 647px; }
.pager a { width: 40px; height: 52px; border: 1px solid #24493c; border-radius: 3px; color: #24493c; font-size: 24px; line-height: 51px; text-align: center; }
.pager .prev, .pager .next { width: 35px; font-size: 22px; }
.pager .prev { border-radius: 10px 3px 3px 10px; }
.pager .next { border-radius: 3px 10px 10px 3px; }
.pager .on { width: 41px; background: #1f3f34; border-color: #092c65; color: #666; }

/* alert */
.dialog { position: absolute; left: 712px; top: 86px; width: 559px; height: 156px; border-radius: 9px; background: #292929; color: #fff; box-shadow: 0 0 1px #000, 0 10px 30px rgba(0,0,0,.4); padding: 20px 19px 0 20px; }
.dialog h2 { margin: 0; font-size: 17px; line-height: 24px; font-weight: 700; letter-spacing: .05px; }
.dialog p { margin: 12px 0 19px; font-size: 15.3px; line-height: 22px; letter-spacing: 0; }
.dialog-actions { display: flex; justify-content: flex-end; gap: 10px; }
.dialog button { width: 95px; height: 40px; border-radius: 5px; color: #fff; background: none; font-size: 14.3px; font-weight: 600; letter-spacing: -.2px; }
.dialog .ok { background: #245cd0; }
.dialog .cancel { border: 1px solid #777; }

/* taskbar */
.taskbar { height: 50px; display: flex; background: linear-gradient(90deg, #171b20, #1d232b 25%, #22252d 40%, #23242a 64%, #2c2526 69%, #202530 78%, #26222b 87%, #1c1d22 94%, #1e2329); color: #fff; }
.start { width: 60px; display: flex; align-items: center; justify-content: center; }
.task-search { width: 360px; border: 1px solid #555; background: #333; display: flex; align-items: center; gap: 14px; padding-left: 14px; font-size: 17.8px; letter-spacing: .05px; color: #ddd; }
.slot { width: 62px; display: flex; align-items: center; justify-content: center; border-bottom: 3px solid transparent; padding-top: 3px; }
.slot.tv { width: 63px; padding-right: 2px; }
.slot.open { background: linear-gradient(#b2afb3, #b2afb3) 5px 100% / 51px 3px no-repeat border-box; }
.slot.stack { background: linear-gradient(90deg, #b2afb3 40px, #858388 40px) 5px 100% / 51px 3px no-repeat border-box; }
.slot.active { background: #4e515b; border-color: #b2afb3; }
.wp { font: 700 15px "Liberation Serif", serif; fill: #f58a2e; }
.tm { font: 700 12px "Open Sans", sans-serif; fill: #fff; }
.ch { font: 12px "Open Sans", sans-serif; fill: #fff; }
.tray { flex: 1; display: flex; align-items: center; padding-left: 106px; font-size: 17.3px; letter-spacing: -.25px; }
.temp { margin-left: 10px; width: 38px; }
.meteo { margin-left: 10px; width: 117px; white-space: nowrap; }
.t1 { margin-left: 29px; }
.t2 { margin-left: 14px; }
.t3 { margin-left: 10px; }
.t4 { margin-left: 12px; }
.t5 { margin-left: 11px; }
.t6 { margin-left: 9px; }
.t7 { margin-left: 14px; }
.lang { margin-left: 18px; width: 28px; font-size: 14.5px; letter-spacing: -.2px; }
.clock { margin-left: 13px; width: 80px; display: flex; flex-direction: column; text-align: center; font-size: 14.5px; line-height: 23px; letter-spacing: -.3px; }
.t8 { margin-left: 21px; }
.desk { width: 1px; align-self: stretch; background: #777; margin: 0 5px 0 auto; }
```
